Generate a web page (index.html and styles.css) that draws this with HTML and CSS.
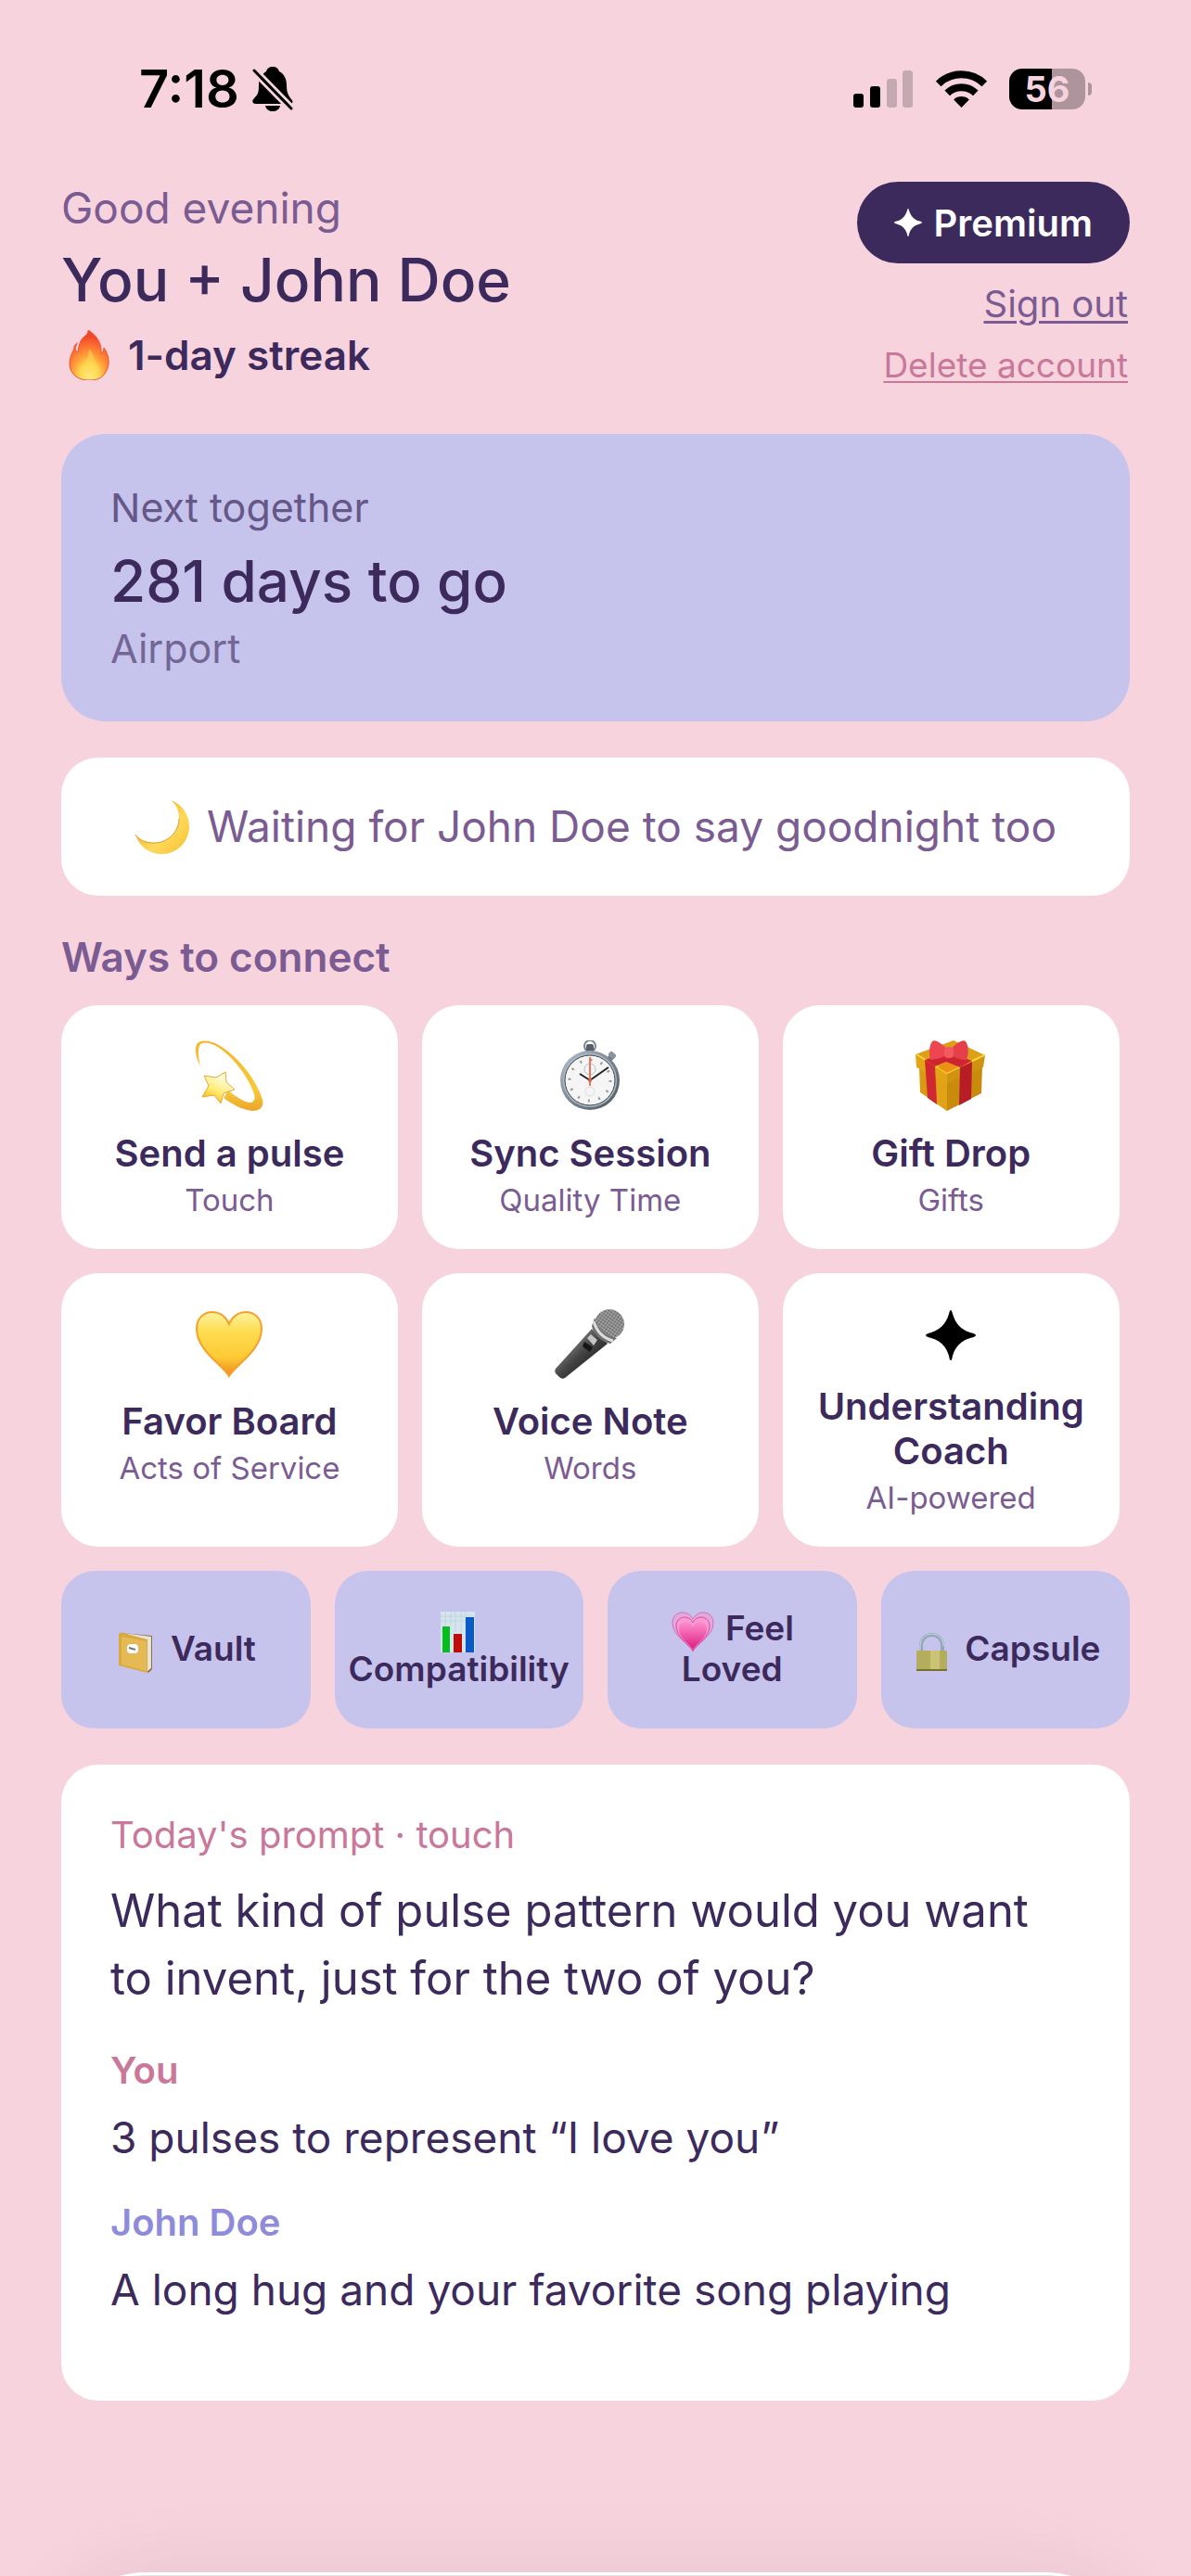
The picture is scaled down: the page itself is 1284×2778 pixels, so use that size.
FILE: index.html
```html
<!DOCTYPE html>
<html lang="en">
<head>
    <meta charset="UTF-8">
    <meta name="viewport" content="width=device-width, initial-scale=1">
    <title>You + John Doe</title>
    <link rel="stylesheet" href="styles.css">
</head>
<body>

<div class="status">
    <span class="time">7:18</span>
    <svg class="bell" width="44" height="48" viewBox="0 0 44 48">
        <path d="M22 0c4 0 6 2 7 5 6 3 8 9 8 15 0 8 2 11 5 15 3 3 1 5-2 5H4c-4 0-5-3-2-6 4-4 5-6 5-14 0-7 3-12 8-15 1-3 3-5 7-5z"/>
        <path d="M14 42h16c-1 4-4 6-8 6s-7-2-8-6z"/>
        <path d="M0 6l42 43M4 2l41 42" stroke="#f7d3de" stroke-width="3"/>
        <path d="M2 4l40 41" stroke="#000" stroke-width="3" stroke-linecap="round"/>
    </svg>
    <div class="status-right">
        <svg width="65" height="40" viewBox="0 0 65 40">
            <rect y="25" width="11" height="15" rx="3"/>
            <rect x="18" y="17" width="11" height="23" rx="3"/>
            <rect x="36" y="9" width="11" height="31" rx="3" fill="#c5a9b2"/>
            <rect x="53" width="11" height="40" rx="3" fill="#c5a9b2"/>
        </svg>
        <svg width="55" height="40" viewBox="0 0 55 40">
            <path d="M2.7 14.4a35.5 35.5 0 0 1 49.6 0M12.2 24.4a22 22 0 0 1 30.6 0" fill="none" stroke="#000" stroke-width="8"/>
            <path d="M27.5 40l-8.3-8.6a12 12 0 0 1 16.6 0z"/>
        </svg>
        <div class="battery"><span>56</span></div>
    </div>
</div>

<main class="page">
    <header class="header">
        <div class="who">
            <p class="greeting">Good evening</p>
            <h1>You + John Doe</h1>
            <p class="streak">
                <svg width="60" height="54" viewBox="0 0 60 54">
                    <defs>
                        <radialGradient id="fire" cx="0.5" cy="0.92" r="0.8">
                            <stop offset="0" stop-color="#fffbd0"/>
                            <stop offset="0.25" stop-color="#ffe45c"/>
                            <stop offset="0.5" stop-color="#ffa53b"/>
                            <stop offset="0.8" stop-color="#fb6a30"/>
                            <stop offset="1" stop-color="#f0452a"/>
                        </radialGradient>
                    </defs>
                    <path d="M29 0c10 6 15 15 14 26 2-2 3-4 3-7 6 9 7 18 2 26-3 6-8 9-18 9-12 0-20-6-21-17 0-8 3-13 6-19 0 3 1 5 3 6 1-9 3-14 7-17 4-3 4-5 4-7z" fill="url(#fire)" stroke="#f4502e" stroke-width="1"/>
                    <path d="M18 13c-4 3-6 5-4 8 2-2 3-5 4-8z" fill="#f4603a"/>
                    <path d="M30 20c6 7 6 14 9 18 5 7-1 15-9 15s-14-6-10-14c2 1 3 1 4 0 3-6 6-10 6-19z" fill="#ffd54f" opacity=".6"/>
                </svg>
                1-day streak
            </p>
        </div>
        <div class="account">
            <button class="premium" type="button">
                <svg width="30" height="30" viewBox="0 0 54 54"><path d="M27 0c1 0 1.5 2 2 4 3 10 9 17 19 20 4 1 6 2 6 3s-2 2-6 3c-10 3-16 9-19 19-.5 3-1 5-2 5s-1.5-2-2-5c-3-10-9-16-19-19-4-1-6-2-6-3s2-2 6-3c10-3 16-10 19-20 .5-2 1-4 2-4z" fill="#fff"/></svg>
                Premium
            </button>
            <a class="signout" href="#">Sign out</a>
            <a class="delete" href="#">Delete account</a>
        </div>
    </header>

    <section class="next">
        <p>Next together</p>
        <h2>281 days to go</h2>
        <p class="place">Airport</p>
    </section>

    <section class="goodnight">
        <svg width="60" height="58" viewBox="0 0 60 58">
            <defs>
                <linearGradient id="moon" x1="0" y1="0" x2="1" y2="1">
                    <stop offset="0.3" stop-color="#f2b92e"/>
                    <stop offset="0.6" stop-color="#ffd95c"/>
                    <stop offset="1" stop-color="#f3c02f"/>
                </linearGradient>
            </defs>
            <path d="M39 0c12 4 20 15 20 28 0 17-13 30-30 30-13 0-24-8-28-21 3 5 10 9 20 9 15 0 27-12 27-26 0-9-3-16-9-20z" fill="url(#moon)"/>
            <path d="M1 37c3 5 10 9 20 9 15 0 27-12 27-26" fill="none" stroke="#d79f2a" stroke-width="1"/>
        </svg>
        <p>Waiting for John Doe to say goodnight too</p>
    </section>

    <h3>Ways to connect</h3>

    <div class="tiles">
        <button class="tile" type="button">
            <svg width="76" height="76" viewBox="0 0 76 76">
                <defs>
                    <linearGradient id="swirl" x1="0" y1="0" x2="0" y2="1">
                        <stop offset="0" stop-color="#f5b52e"/>
                        <stop offset="0.7" stop-color="#f8c93a"/>
                        <stop offset="1" stop-color="#eba52b"/>
                    </linearGradient>
                    <linearGradient id="star" x1="0.7" y1="0" x2="0.2" y2="1">
                        <stop offset="0.2" stop-color="#fffbd6"/>
                        <stop offset="0.6" stop-color="#ffea70"/>
                        <stop offset="1" stop-color="#efb400"/>
                    </linearGradient>
                </defs>
                <path d="M7 28C2 18 0 8 4 3 8-1 17 0 25 4c24 13 44 42 49 60 2 8-3 12-11 12-10-1-20-6-31-14l5-8c10 8 19 13 24 13 6-1 5-7 3-12C57 37 41 16 24 6 16 2 8 1 6 6c-2 5-1 13 1 22z" fill="url(#swirl)"/>
                <path d="M34 34l1 11 9 8-12 4-3 11-7-9-13 2 7-12-5-11 13 2z" fill="url(#star)" stroke="#eda533" stroke-width="1" stroke-linejoin="round"/>
            </svg>
            <span class="name">Send a pulse</span>
            <span class="kind">Touch</span>
        </button>
        <button class="tile" type="button">
            <svg width="76" height="76" viewBox="0 0 76 76">
                <defs>
                    <linearGradient id="steel" x1="0" y1="0" x2="1" y2="1">
                        <stop offset="0" stop-color="#b9c2cc"/>
                        <stop offset="0.5" stop-color="#7d8791"/>
                        <stop offset="1" stop-color="#4d555e"/>
                    </linearGradient>
                </defs>
                <path d="M60 15l4 4-5 6-4-5z" fill="#68727c"/>
                <rect x="58" y="13" width="8" height="6" rx="2" transform="rotate(42 62 16)" fill="#8a949e"/>
                <circle cx="38" cy="6" r="6" fill="none" stroke="#7a848e" stroke-width="2"/>
                <rect x="34" y="4" width="8" height="9" rx="2" fill="#56606a"/>
                <circle cx="38" cy="43" r="32" fill="url(#steel)"/>
                <circle cx="38" cy="43" r="29" fill="#a8bccd"/>
                <circle cx="38" cy="43" r="27" fill="#f5f5f5" stroke="#444" stroke-width="1"/>
                <circle cx="38" cy="43" r="22" fill="none" stroke="#999" stroke-width="3" stroke-dasharray="2 9.5"/>
                <circle cx="38" cy="31" r="6" fill="none" stroke="#bbb"/>
                <circle cx="38" cy="55" r="5" fill="none" stroke="#ddd"/>
                <path d="M38 43L27 36M38 43l20-14" stroke="#222" stroke-width="2"/>
                <path d="M38 18v31" stroke="#f0755e" stroke-width="2"/>
                <circle cx="38" cy="43" r="2" fill="#e2604a"/>
            </svg>
            <span class="name">Sync Session</span>
            <span class="kind">Quality Time</span>
        </button>
        <button class="tile" type="button">
            <svg width="76" height="76" viewBox="0 0 76 76">
                <path d="M4 29l30 16v31L5 56z" fill="#d99a12"/>
                <path d="M34 45l38-17-1 29-37 19z" fill="#c88b0c"/>
                <path d="M23 41l11 5v30l-11-8z" fill="#e0a318"/>
                <path d="M0 15l34 20v12L1 29z" fill="#e2a516"/>
                <path d="M34 35l41-19-2 13-39 18z" fill="#cf930f"/>
                <path d="M0 15L41 0l34 16-41 19z" fill="#dba018"/>
                <path d="M1 15l33 20 40-19" fill="none" stroke="#f9d23a" stroke-width="2"/>
                <path d="M10 21l11 7 2 41-10-7z" fill="#d12730"/>
                <path d="M48 29l13-6-1 40-13 7z" fill="#b81c27"/>
                <path d="M10 21l25-8 26 9-13 7-15-6-12 5z" fill="#cf2530"/>
                <path d="M24 29l11-5 11 5-12 6z" fill="#ee9016"/>
                <path d="M35 11C30 4 21-2 18 1c-3 4-4 12-2 20 7 0 15-3 19-6z" fill="#ed4650"/>
                <path d="M37 11C42 4 51-2 54 1c3 4 4 12 1 20-7 0-14-3-18-6z" fill="#e5404a"/>
                <rect x="31" y="7" width="10" height="12" rx="4" fill="#f25a5f"/>
            </svg>
            <span class="name">Gift Drop</span>
            <span class="kind">Gifts</span>
        </button>
        <button class="tile" type="button">
            <svg width="76" height="76" viewBox="0 0 76 76">
                <defs>
                    <linearGradient id="gold" x1="0" y1="0" x2="0" y2="1">
                        <stop offset="0" stop-color="#fff3a0"/>
                        <stop offset="0.3" stop-color="#fddc50"/>
                        <stop offset="0.7" stop-color="#fdcb35"/>
                        <stop offset="1" stop-color="#f08a1d"/>
                    </linearGradient>
                </defs>
                <path d="M38 73C30 60 3 45 3 22 3 11 10 4 20 4c8 0 15 5 18 13C41 9 48 4 56 4c10 0 17 7 17 18 0 23-27 38-35 51z" fill="url(#gold)" stroke="#f5a02b" stroke-width="2"/>
            </svg>
            <span class="name">Favor Board</span>
            <span class="kind">Acts of Service</span>
        </button>
        <button class="tile" type="button">
            <svg width="76" height="76" viewBox="0 0 76 76">
                <defs>
                    <linearGradient id="handle" x1="0" y1="0" x2="1" y2="1">
                        <stop offset="0.3" stop-color="#777"/>
                        <stop offset="0.5" stop-color="#444"/>
                        <stop offset="0.8" stop-color="#1d1d1d"/>
                    </linearGradient>
                    <pattern id="mesh" width="3" height="3" patternUnits="userSpaceOnUse" patternTransform="rotate(35)">
                        <rect width="3" height="3" fill="#a5a5a5"/>
                        <circle cx="1.5" cy="1.5" r="1" fill="#555"/>
                    </pattern>
                </defs>
                <path d="M40 22l17 16L11 75c-2 1-4 1-6-1l-4-4c-1-2-1-3 0-5z" fill="url(#handle)"/>
                <circle cx="59" cy="17" r="16" fill="url(#mesh)"/>
                <path d="M43 10c3 12 11 20 24 22l-7 6C50 36 42 28 40 19z" fill="#707070"/>
                <path d="M42 14c3 10 10 18 21 21" fill="none" stroke="#ddd" stroke-width="3"/>
                <path d="M35 32l4-4 7 6-4 6z" fill="#c9c4c6"/>
                <path d="M32 36l9 6-3 5-8-6z" fill="#151515"/>
            </svg>
            <span class="name">Voice Note</span>
            <span class="kind">Words</span>
        </button>
        <button class="tile" type="button">
            <svg class="spark" width="54" height="54" viewBox="0 0 54 54"><path d="M27 0c1 0 1.5 2 2 4 3 10 9 17 19 20 4 1 6 2 6 3s-2 2-6 3c-10 3-16 9-19 19-.5 3-1 5-2 5s-1.5-2-2-5c-3-10-9-16-19-19-4-1-6-2-6-3s2-2 6-3c10-3 16-10 19-20 .5-2 1-4 2-4z"/></svg>
            <span class="name">Understanding Coach</span>
            <span class="kind">AI-powered</span>
        </button>
    </div>

    <div class="chips">
        <button class="chip" type="button">
            <svg width="48" height="44" viewBox="0 0 48 44">
                <path d="M7 1l32 3v36l-4 4z" fill="#8d6f3a"/>
                <path d="M8 1l30 4v34l-5 4V9z" fill="#e6e4df"/>
                <path d="M3 3c0-2 2-3 4-2l27 7v36L3 36z" fill="#d9aa3d"/>
                <path d="M6 5l27 5v32L6 35z" fill="#e5ba55"/>
                <rect x="12" y="13" width="12" height="10" rx="4" fill="#fff"/>
                <path d="M14 17l7 2" stroke="#777" stroke-width="2"/>
            </svg> Vault
        </button>
        <button class="chip" type="button">
            <svg width="48" height="44" viewBox="0 0 48 44">
                <path d="M5 0h37v44H5z" fill="#d5e5ee"/>
                <path d="M5 5h37M5 10h37M10 0v44M16 0v14M21 0v22M27 0v22M32 0v44" stroke="#c0d5df" stroke-width="1"/>
                <path d="M7 16h8v28H7z" fill="#06bd20"/>
                <path d="M19 24h9v20h-9z" fill="#c10a0a"/>
                <path d="M32 6h9v38h-9z" fill="#0a59c9"/>
            </svg> Compatibility
        </button>
        <button class="chip" type="button">
            <svg width="48" height="44" viewBox="0 0 48 44">
                <defs>
                    <linearGradient id="pink" x1="0" y1="0" x2="0" y2="1">
                        <stop offset="0" stop-color="#ff8fd0"/>
                        <stop offset="1" stop-color="#dc1c7c"/>
                    </linearGradient>
                </defs>
                <path d="M24 43C20 34 2 27 2 12 2 5 7 1 13 1c5 0 9 3 11 7 2-4 6-7 11-7 6 0 11 4 11 11 0 15-18 22-22 31z" fill="#e3a9dc" stroke="#d070b8" stroke-width="1"/>
                <path d="M24 42C20 35 6 28 6 15c0-5 4-9 9-9 4 0 7 2 9 6 2-4 5-6 9-6 5 0 9 4 9 9 0 13-14 20-18 27z" fill="#f79bd3" stroke="#e0479f" stroke-width="1"/>
                <path d="M24 41c-3-6-15-12-15-22 0-5 3-8 7-8s7 2 8 6c1-4 4-6 8-6s7 3 7 8c0 10-12 16-15 22z" fill="url(#pink)"/>
            </svg> Feel Loved
        </button>
        <button class="chip" type="button">
            <svg width="48" height="44" viewBox="0 0 48 44">
                <path d="M12 22v-7c0-16 23-16 23 0v7" fill="none" stroke="#93a7b5" stroke-width="4"/>
                <path d="M11 21v-6C11-2 36-2 36 15" fill="none" stroke="#c4dbe8" stroke-width="1"/>
                <rect x="7" y="20" width="33" height="22" rx="1" fill="#b5ad5e"/>
                <path d="M22 20h10v22H22z" fill="#cbc477"/>
                <path d="M7 40h33v2H7z" fill="#77702f"/>
            </svg> Capsule
        </button>
    </div>

    <section class="prompt">
        <p class="label">Today's prompt · touch</p>
        <p class="question">What kind of pulse pattern would you want to invent, just for the two of you?</p>
        <p class="author">You</p>
        <p class="answer">3 pulses to represent “I love you”</p>
        <p class="author partner">John Doe</p>
        <p class="answer">A long hug and your favorite song playing</p>
    </section>
</main>

<div class="tabbar"></div>

</body>
</html>
```
FILE: styles.css
```css
*{
    box-sizing: border-box;
}
html{
    min-height: 100%;
    background-color: #f7d3de;
}
body{
    margin: 0;
    font-family: Inter, "Liberation Sans", sans-serif;
    color: #3d2a5c;
}
h1, h2, h3, p{
    margin: 0;
}
button{
    border: none;
    margin: 0;
    font-family: inherit;
    color: inherit;
    cursor: pointer;
}
svg{
    flex: none;
}

/* status bar */
.status{
    display: flex;
    align-items: center;
    gap: 14px;
    padding: 62px 106px 0 150px;
    color: #000;
}
.time{
    font-size: 56px;
    line-height: 68px;
    font-weight: 600;
}
.status-right{
    display: flex;
    align-items: center;
    gap: 24px;
    margin-left: auto;
}
.battery{
    position: relative;
    width: 82px;
    height: 44px;
    margin-right: 8px;
    border-radius: 14px;
    background: linear-gradient(to right, #000 56%, #ae959d 56%);
    color: #f7d3de;
    font-size: 38px;
    line-height: 44px;
    font-weight: 700;
    text-align: center;
}
.battery::after{
    content: "";
    position: absolute;
    left: 85px;
    top: 15px;
    width: 4px;
    height: 14px;
    border-radius: 0 4px 4px 0;
    background-color: #ae959d;
}

.page{
    padding: 66px 66px 190px;
}

/* header */
.header{
    display: flex;
    justify-content: space-between;
    margin-bottom: 52px;
}
.who{
    display: flex;
    flex-direction: column;
    gap: 8px;
}
.greeting{
    font-size: 46px;
    line-height: 56px;
    color: #7b5c92;
}
.who h1{
    font-size: 64px;
    line-height: 84px;
    font-weight: 500;
}
.streak{
    display: flex;
    align-items: center;
    gap: 12px;
    font-size: 44px;
    line-height: 62px;
    font-weight: 600;
}
.account{
    display: flex;
    flex-direction: column;
    align-items: flex-end;
    gap: 20px;
}
.premium{
    display: flex;
    align-items: center;
    gap: 13px;
    height: 88px;
    padding: 0 40px;
    border-radius: 44px;
    background-color: #3d2a5c;
    color: #fff;
    font-size: 40px;
    font-weight: 600;
}
.signout, .delete{
    margin-right: 2px;
    font-size: 40px;
    line-height: 48px;
    color: #7b5c92;
    text-underline-offset: 4px;
    text-decoration-thickness: 3px;
}
.delete{
    font-size: 37px;
    line-height: 44px;
    color: #c9789a;
    text-decoration-thickness: 2px;
}

/* cards */
.next{
    padding: 53px;
    border-radius: 48px;
    background-color: #c6c3ed;
    font-size: 43px;
    line-height: 52px;
}
.next p{
    opacity: 0.7;
}
.next .place{
    opacity: 0.6;
}
.next h2{
    margin: 12px 0 4px;
    font-size: 62px;
    line-height: 84px;
    font-weight: 500;
}
.goodnight{
    display: flex;
    align-items: center;
    justify-content: center;
    gap: 18px;
    margin-top: 39px;
    padding: 44px 40px;
    border-radius: 40px;
    background-color: #fff;
    font-size: 46px;
    line-height: 61px;
    color: #7b5c92;
}
.page h3{
    margin: 40px 0 26px;
    font-size: 44px;
    line-height: 52px;
    font-weight: 600;
    color: #7b5c92;
}

.tiles{
    display: grid;
    grid-template-columns: repeat(3, 31.5%);
    gap: 26px;
}
.tile{
    display: flex;
    flex-direction: column;
    align-items: center;
    padding: 38px 26px 33px;
    border-radius: 40px;
    background-color: #fff;
}
.name{
    margin: 22px 0 6px;
    font-size: 40px;
    line-height: 48px;
    font-weight: 600;
}
.kind{
    font-size: 33px;
    line-height: 40px;
    color: #7b5c92;
}
.spark{
    margin: 2px 0 4px;
}

.chips{
    display: grid;
    grid-template-columns: repeat(4, 1fr);
    gap: 26px;
    margin-top: 26px;
}
.chip{
    min-width: 0;
    padding: 40px 12px 42px;
    border-radius: 36px;
    background-color: #c6c3ed;
    font-size: 37px;
    line-height: 44px;
    font-weight: 600;
}
.chip svg{
    margin: -4px 2px -4px 0;
    vertical-align: -9px;
}

.prompt{
    margin-top: 39px;
    padding: 52px 53px;
    border-radius: 40px;
    background-color: #fff;
}
.label, .author{
    font-size: 40px;
    line-height: 48px;
    color: #c9789a;
}
.question{
    margin: 21px 0 39px;
    font-size: 49px;
    line-height: 73px;
}
.author{
    font-weight: 600;
}
.partner{
    color: #8f8bdb;
}
.answer{
    margin: 18px 0 38px;
    font-size: 46px;
    line-height: 60px;
}

/* floating bar, only its top edge shows */
.tabbar{
    position: fixed;
    left: 63px;
    right: 63px;
    bottom: -182px;
    height: 186px;
    border: 3px solid #fff;
    border-radius: 93px;
    background-color: #e2e2e2;
    box-shadow: 0 0 90px rgba(0, 0, 0, 0.08);
}
```
